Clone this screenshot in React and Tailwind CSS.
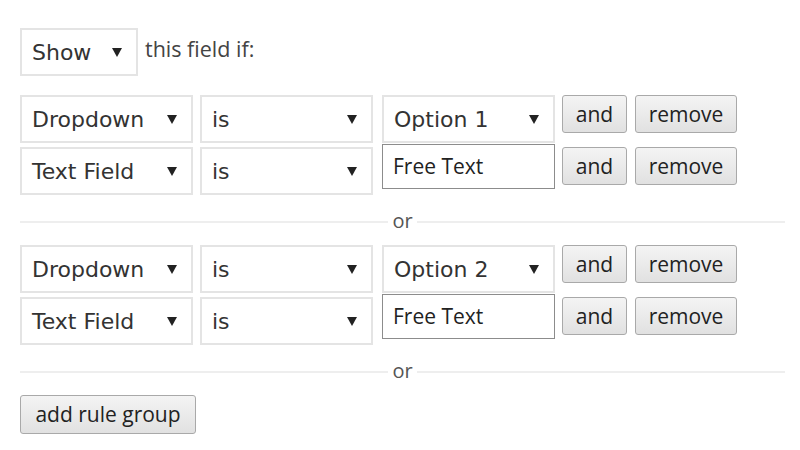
import React from 'react'

const sans = { fontFamily: '"Open Sans", "Noto Sans", sans-serif' }

const Arrow = () => (
  <svg width="10" height="10" viewBox="0 0 10 10" className="shrink-0">
    <path d="M0 1 L10 1 L5 10 Z" fill="#222" />
  </svg>
)

const Select = ({ label, width = 'w-[173px]' }) => (
  <div
    className={`${width} h-[48px] border-2 border-[#e4e4e4] bg-white flex items-center justify-between pl-[10px] pr-[14px] text-[22px] text-[#333] font-['DejaVu_Sans',sans-serif]`}
  >
    <span>{label}</span>
    <Arrow />
  </div>
)

const Button = ({ children, className = '' }) => (
  <button
    className={`h-[38px] border border-[#a9a9a9] rounded-[3px] bg-gradient-to-b from-[#f4f4f4] to-[#e1e1e1] text-[21px] text-[#222] font-['Open_Sans',sans-serif] leading-none ${className}`}
  >
    {children}
  </button>
)

const RuleRow = ({ field, value, text }) => (
  <div className="flex items-start">
    <Select label={field} />
    <div className="ml-[7px]">
      <Select label="is" />
    </div>
    <div className="ml-[9px]">
      {text ? (
        <div className="w-[173px] h-[45px] -mt-[3px] border border-[#8c8c8c] bg-white flex items-center pl-[10px] text-[21px] text-[#222] font-['Open_Sans',sans-serif]">
          {value}
        </div>
      ) : (
        <Select label={value} />
      )}
    </div>
    <Button className="ml-[7px] w-[65px]">and</Button>
    <Button className="ml-[8px] w-[102px]">remove</Button>
  </div>
)

const Group = ({ option }) => (
  <div className="flex flex-col gap-[4px]">
    <RuleRow field="Dropdown" value={option} />
    <RuleRow field="Text Field" value="Free Text" text />
  </div>
)

const Divider = () => (
  <div className="h-[50px] flex items-center pt-[4px]">
    <div className="flex-1 h-[2px] bg-[#eeeeee]" />
    <span className="px-[4px] text-[20px] text-[#555] leading-none -mt-[3px]" style={sans}>
      or
    </span>
    <div className="flex-1 h-[2px] bg-[#eeeeee]" />
  </div>
)

export default function App() {
  return (
    <div className="w-[800px] h-[450px] bg-white pl-5 pr-[15px] pt-7 overflow-hidden">
      <div className="flex items-start">
        <div className="w-[118px] h-[48px] border-2 border-[#e4e4e4] flex items-center justify-between pl-[10px] pr-[14px] text-[22px] text-[#333] font-['DejaVu_Sans',sans-serif]">
          <span>Show</span>
          <Arrow />
        </div>
        <span className="ml-[7px] mt-[7px] text-[21.5px] leading-[28px] text-[#444]" style={sans}>
          this field if:
        </span>
      </div>

      <div className="mt-[19px]">
        <Group option="Option 1" />
      </div>
      <Divider />
      <Group option="Option 2" />
      <Divider />

      <Button className="w-[176px] h-[39px] text-[21.5px]">add rule group</Button>
    </div>
  )
}
